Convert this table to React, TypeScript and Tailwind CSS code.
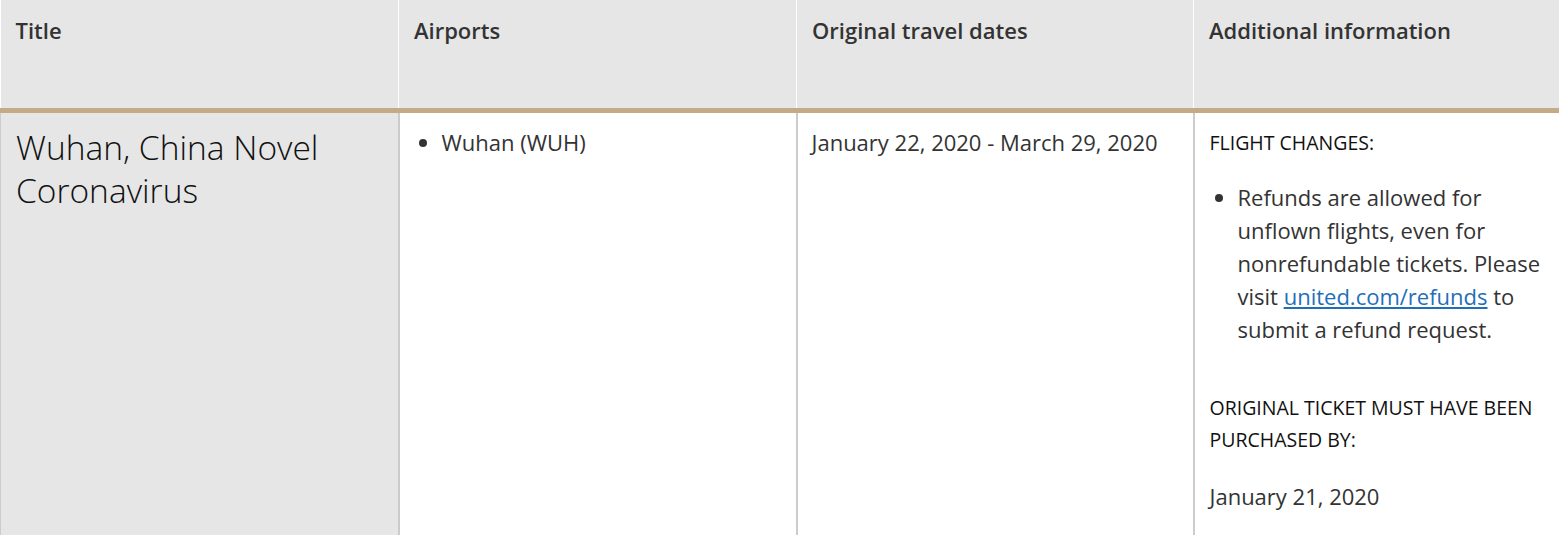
import React from 'react';

const headers = ['Title', 'Airports', 'Original travel dates', 'Additional information'];

export default function App() {
  return (
    <div className="w-full overflow-hidden bg-white font-['Open_Sans',sans-serif] text-[#333]">
      <table className="w-[1559px] table-fixed border-collapse">
        <colgroup>
          <col className="w-[398px]" />
          <col className="w-[398px]" />
          <col className="w-[397px]" />
          <col className="w-[366px]" />
        </colgroup>
        <thead>
          <tr>
            {headers.map((h, i) => (
              <th
                key={h}
                className={`h-[110px] bg-[#e6e6e6] px-[15px] pt-[15px] text-left align-top text-[22px] font-semibold leading-[30px] text-[#333] border-b-[5px] border-b-[#c4aa86] ${
                  i === 0 ? '' : 'border-l border-l-white'
                }`}
              >
                {h}
              </th>
            ))}
          </tr>
        </thead>
        <tbody>
          <tr>
            {/* Title */}
            <td className="h-[440px] bg-[#e6e6e6] border-l border-l-[#ccc] px-[15px] pt-[13px] align-top">
              <div className="text-[33.5px] font-light leading-[43px] text-[#111]">
                Wuhan, China Novel Coronavirus
              </div>
            </td>

            {/* Airports */}
            <td className="border-l-2 border-l-[#ccc] px-4 pt-[13px] align-top">
              <ul className="list-disc pl-[26px] text-[22px] leading-[33px]">
                <li>Wuhan (WUH)</li>
              </ul>
            </td>

            {/* Dates */}
            <td className="border-l-2 border-l-[#ccc] pl-[14px] pr-4 pt-[13px] align-top text-[22px] leading-[33px]">
              January 22, 2020 - March 29, 2020
            </td>

            {/* Additional information */}
            <td className="border-l-2 border-l-[#ccc] pl-[15px] pr-[12px] pt-[14px] align-top">
              <p className="text-[19.5px] leading-[32px] text-[#111]">FLIGHT CHANGES:</p>
              <ul className="mt-[22px] list-disc pl-[28px] text-[22px] leading-[33px]">
                <li>
                  Refunds are allowed for unflown flights, even for nonrefundable tickets. Please visit{' '}
                  <a href="#" className="text-[#1f6fb8] underline">
                    united.com/refunds
                  </a>{' '}
                  to submit a refund request.
                </li>
              </ul>
              <p className="mt-[46px] text-[19.5px] leading-[32px] text-[#111]">
                ORIGINAL TICKET MUST HAVE BEEN PURCHASED BY:
              </p>
              <p className="mt-[24px] text-[22px] leading-[33px]">January 21, 2020</p>
            </td>
          </tr>
        </tbody>
      </table>
    </div>
  );
}
